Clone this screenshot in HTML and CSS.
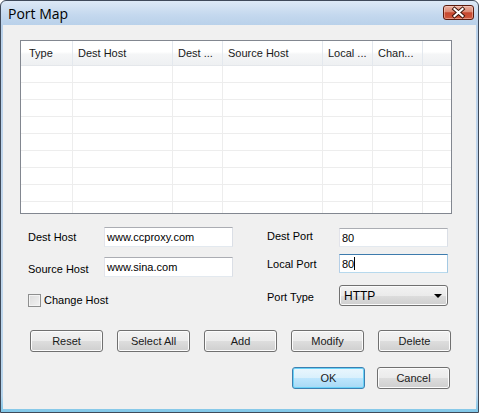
FILE: index.html
```html
<!DOCTYPE html>
<html>
<head>
<meta charset="utf-8">
<title>Port Map</title>
<link rel="stylesheet" href="styles.css">
</head>
<body>
<div class="window">
  <div class="titlebar">
    <span class="title">Port Map</span>
    <div class="close">
      <svg width="29" height="13" viewBox="0 0 29 13">
        <path d="M10.5 3 L18.5 10 M18.5 3 L10.5 10" stroke="#3b1208" stroke-width="4" stroke-linecap="square" fill="none"/>
        <path d="M10.5 3 L18.5 10 M18.5 3 L10.5 10" stroke="#ffffff" stroke-width="2.2" stroke-linecap="square" fill="none"/>
      </svg>
    </div>
  </div>
  <div class="client">
    <div class="listview">
      <div class="lv-head">
        <div class="hd c1 first">Type</div>
        <div class="hd c2">Dest Host</div>
        <div class="hd c3">Dest ...</div>
        <div class="hd c2">Source Host</div>
        <div class="hd c3">Local ...</div>
        <div class="hd c3">Chan...</div>
        <div class="hd fill"></div>
      </div>
      <div class="lv-body">
        <div class="col c1"></div>
        <div class="col c2"></div>
        <div class="col c3"></div>
        <div class="col c2"></div>
        <div class="col c3"></div>
        <div class="col c3"></div>
        <div class="col fill"></div>
      </div>
    </div>

    <div class="form">
      <div class="fcol left">
        <div class="field r1">
          <span class="lbl lbl-l">Dest Host</span>
          <div class="edit edit-l">www.ccproxy.com</div>
        </div>
        <div class="field r2">
          <span class="lbl lbl-l">Source Host</span>
          <div class="edit edit-l">www.sina.com</div>
        </div>
        <div class="field r3">
          <span class="checkbox"></span>
          <span class="chklbl">Change Host</span>
        </div>
      </div>
      <div class="fcol right">
        <div class="field rr1">
          <span class="lbl lbl-r">Dest Port</span>
          <div class="edit edit-r">80</div>
        </div>
        <div class="field rr2">
          <span class="lbl lbl-r">Local Port</span>
          <div class="edit edit-r focused">80<span class="caret"></span></div>
        </div>
        <div class="field rr3">
          <span class="lbl lbl-r">Port Type</span>
          <div class="combo">
            <span>HTTP</span>
            <span class="arrow"></span>
          </div>
        </div>
      </div>
    </div>

    <div class="btnrow">
      <button class="btn">Reset</button>
      <button class="btn">Select All</button>
      <button class="btn">Add</button>
      <button class="btn">Modify</button>
      <button class="btn">Delete</button>
    </div>

    <div class="dlgrow">
      <button class="btn default">OK</button>
      <button class="btn">Cancel</button>
    </div>
  </div>
</div>
</body>
</html>
```

FILE: styles.css
```css
html, body {
  margin: 0;
  padding: 0;
  background: #ffffff;
}

body {
  font-family: "Liberation Sans", Arial, sans-serif;
  font-size: 11px;
  color: #000000;
}

.window {
  box-sizing: border-box;
  width: 479px;
  height: 413px;
  border: 1px solid #3f4a5a;
  border-radius: 6px 6px 0 0;
  background: linear-gradient(to bottom, #dde9f6 0px, #c4d8ee 14px, #b9d1ea 24px, #c3d7ec 60%, #b6d4ec 96%, #7fc7e8 100%);
  display: flex;
  flex-direction: column;
  overflow: hidden;
}

.titlebar {
  height: 24px;
  flex: none;
  display: flex;
  justify-content: space-between;
  align-items: flex-start;
}

.title {
  font-family: "Open Sans", "Liberation Sans", sans-serif;
  font-size: 14px;
  line-height: 18px;
  padding: 4px 0 0 7px;
  color: #000000;
}

.close {
  box-sizing: border-box;
  width: 31px;
  height: 15px;
  margin: 4px 4px 0 0;
  border: 1px solid #5a1a0c;
  border-radius: 3px;
  background: linear-gradient(to bottom, #eab0a0 0%, #dc8a74 45%, #c7472f 52%, #cf5a3f 100%);
  box-shadow: inset 0 0 0 1px rgba(255, 220, 210, 0.45);
  display: flex;
}

.client {
  flex: 1;
  margin: 0 2px 3px 2px;
  background: #f0f0f0;
  padding: 15px 0 0 17px;
  display: flex;
  flex-direction: column;
}

/* list view */
.listview {
  box-sizing: border-box;
  width: 432px;
  height: 174px;
  border: 1px solid #828790;
  background: #ffffff;
  display: flex;
  flex-direction: column;
  overflow: hidden;
}

.lv-head {
  display: flex;
  height: 24px;
  flex: none;
  background: linear-gradient(to bottom, #ffffff 0%, #ffffff 45%, #f5f6f7 55%, #eef0f2 100%);
  border-bottom: 1px solid #e4e7eb;
}

.hd {
  box-sizing: border-box;
  border-right: 1px solid #e3e8ee;
  padding-left: 5px;
  line-height: 24px;
  color: #1a1a1a;
  white-space: nowrap;
  overflow: hidden;
}

.hd.first {
  padding-left: 8px;
}

.c1 { width: 52px; flex: none; }
.c2 { width: 100px; flex: none; }
.c3 { width: 50px; flex: none; }
.fill { flex: 1; border-right: none; }

.lv-body {
  flex: 1;
  display: flex;
  background: repeating-linear-gradient(to bottom, transparent 0px, transparent 16px, #ededed 16px, #ededed 17px);
}

.col {
  box-sizing: border-box;
  border-right: 1px solid #ededed;
}

.col.fill {
  border-right: none;
}

/* form */
.form {
  display: flex;
  align-items: flex-start;
  margin-left: 8px;
  margin-top: 13px;
}

.fcol {
  display: flex;
  flex-direction: column;
}

.fcol.left {
  width: 205px;
}

.fcol.right {
  margin-left: 34px;
  width: 181px;
}

.field {
  display: flex;
  align-items: center;
}

.r1 { height: 20px; }
.r2 { height: 20px; margin-top: 10px; }
.r3 { height: 20px; margin-top: 13px; }

.rr1 { height: 19px; margin-top: 1px; }
.rr2 { height: 19px; margin-top: 7px; }
.rr3 { height: 21px; margin-top: 12px; }

.lbl {
  flex: none;
  white-space: nowrap;
}

.lbl-l { width: 76px; }
.lbl-r { width: 72px; }

.r2 .lbl { padding-top: 3px; }
.rr1 .lbl { padding-bottom: 3px; }
.rr3 .lbl { padding-top: 3px; }

.edit {
  box-sizing: border-box;
  height: 100%;
  background: #ffffff;
  border: 1px solid;
  border-color: #abadb3 #dbdfe6 #e3e9ef #e2e3ea;
  padding-left: 2px;
  display: flex;
  align-items: center;
  white-space: nowrap;
}

.edit-l { width: 129px; }
.edit-r { width: 109px; }

.edit.focused {
  border-color: #3d7bad #a4c9e3 #b7d9ed #b5cfe7;
}

.caret {
  display: inline-block;
  width: 1px;
  height: 13px;
  background: #000000;
}

.checkbox {
  box-sizing: border-box;
  width: 13px;
  height: 13px;
  border: 1px solid #8e8f8f;
  background: linear-gradient(135deg, #dcdcdc 0%, #f2f2f2 100%);
  box-shadow: inset 0 0 0 1px #f4f4f4;
  margin-right: 3px;
  flex: none;
}

.combo {
  box-sizing: border-box;
  width: 109px;
  height: 21px;
  border: 1px solid #707070;
  border-radius: 3px;
  background: linear-gradient(to bottom, #f2f2f2 0%, #ebebeb 50%, #dddddd 51%, #cfcfcf 100%);
  box-shadow: inset 0 0 0 1px #fbfbfb;
  display: flex;
  align-items: center;
  justify-content: space-between;
  padding: 0 5px 0 4px;
  font-size: 12px;
}

.arrow {
  width: 0;
  height: 0;
  border-left: 4px solid transparent;
  border-right: 4px solid transparent;
  border-top: 4px solid #000000;
  margin-top: 1px;
}

/* buttons */
.btn {
  box-sizing: border-box;
  width: 73px;
  height: 22px;
  padding: 0;
  font: inherit;
  color: #1a1a1a;
  border: 1px solid #707070;
  border-radius: 3px;
  background: linear-gradient(to bottom, #f2f2f2 0%, #ebebeb 50%, #dddddd 51%, #cfcfcf 100%);
  box-shadow: inset 0 0 0 1px #fcfcfc;
}

.btn.default {
  border-color: #3c7fb1;
  background: linear-gradient(to bottom, #eaf6fd 0%, #d9f0fc 50%, #bee6fd 51%, #a7d9f5 100%);
  box-shadow: inset 0 0 0 1px #6ad2f7;
}

.btnrow {
  display: flex;
  gap: 14px;
  margin-top: 20px;
  padding-left: 10px;
}

.dlgrow {
  display: flex;
  justify-content: flex-end;
  gap: 12px;
  margin-top: 15px;
  padding-right: 26px;
}
```
